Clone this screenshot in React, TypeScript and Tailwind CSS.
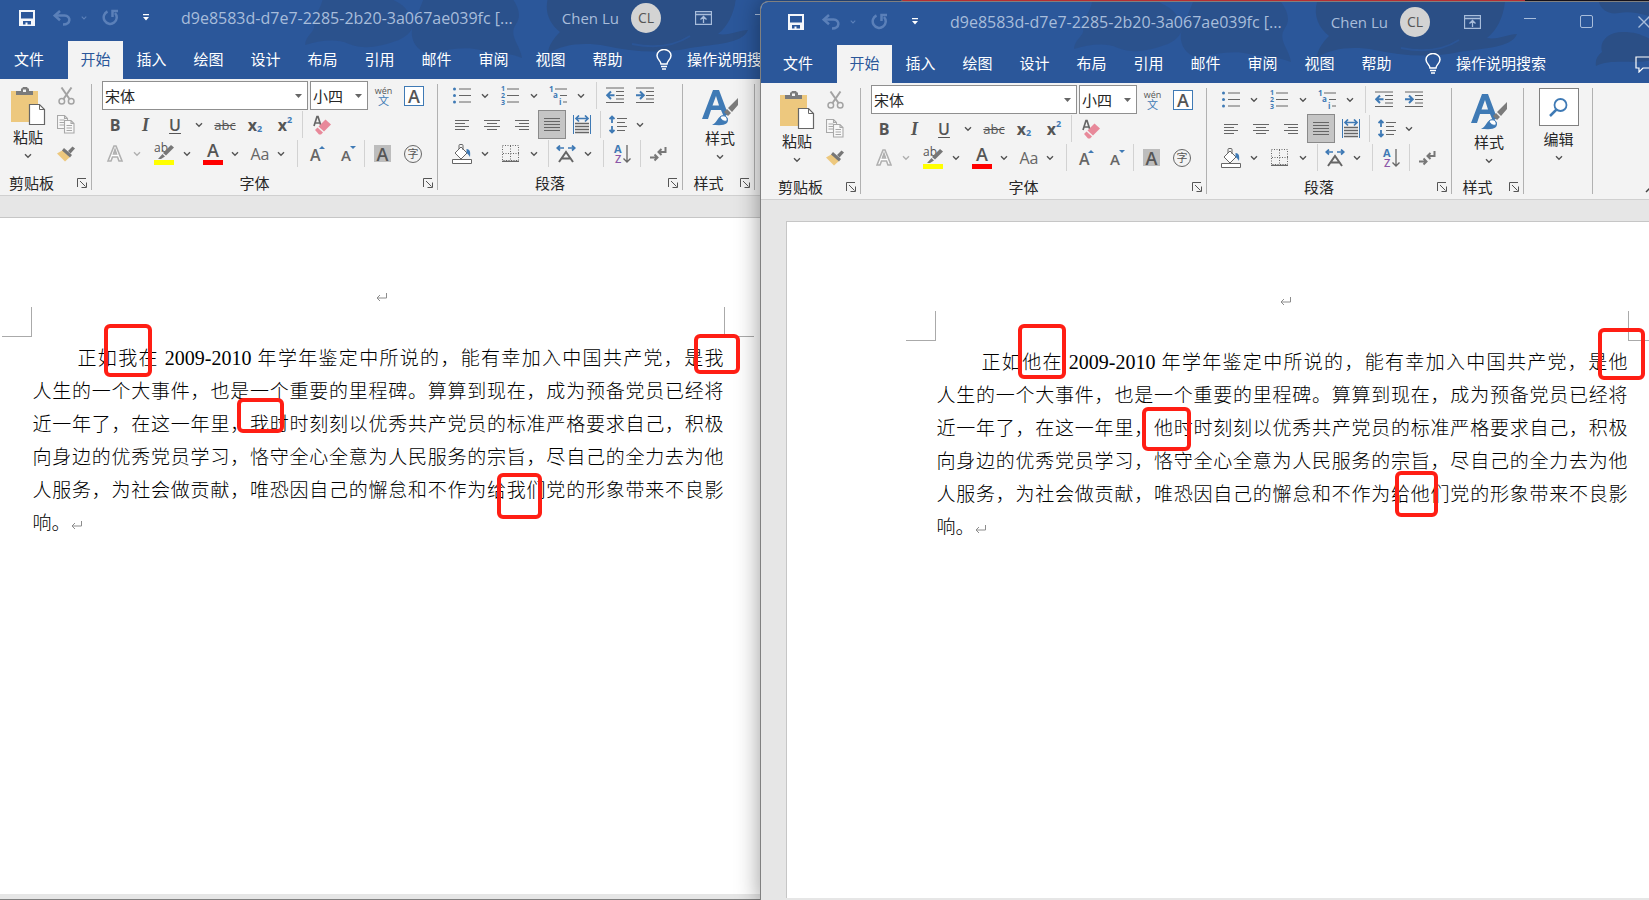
import type { ReactNode } from 'react';

const TABS = ['插入', '绘图', '设计', '布局', '引用', '邮件', '审阅', '视图', '帮助'];

const ICON = '#666666';
const BLUE = '#3f7ab5';

function Tool({ label, className, children }: { label: string; className: string; children: ReactNode }) {
  return (
    <button aria-label={label} className={`flex shrink-0 items-center justify-center ${className}`}>
      {children}
    </button>
  );
}

function Caret({ color = '#555555' }: { color?: string }) {
  return (
    <svg width="8" height="6" viewBox="0 0 8 6" fill="none" stroke={color} strokeWidth="1.4">
      <path d="M1 1.2 4 4.2 7 1.2" />
    </svg>
  );
}

function Drop({ className, color }: { className: string; color?: string }) {
  return (
    <Tool label="更多选项" className={className}>
      <Caret color={color} />
    </Tool>
  );
}

function Divider({ className = '' }: { className?: string }) {
  return <span className={`h-[27px] w-px shrink-0 self-center bg-[#d2d2d2] ${className}`} />;
}

function Launcher() {
  return (
    <button aria-label="对话框启动器" className="shrink-0">
      <svg width="10" height="10" viewBox="0 0 10 10" fill="none" stroke="#555555">
        <path d="M.5 9V.5H9" />
        <path d="M3 3 8.5 8.5M9.5 4.5v5h-5" />
      </svg>
    </button>
  );
}

function Group({ title, className, footer = true, children }: {
  title: string;
  className: string;
  footer?: boolean;
  children: ReactNode;
}) {
  return (
    <section aria-label={title} className={`relative flex shrink-0 flex-col pt-0.5 ${className}`}>
      <div className="h-[87px]">{children}</div>
      {footer && (
        <div className="flex flex-1 items-center pt-0.5 pr-[5px]">
          <span className="flex-1 pr-1.5 text-center text-[#262626]">{title}</span>
          <Launcher />
        </div>
      )}
      <span className="absolute top-[5px] right-0 bottom-[5px] w-px bg-[#b1b1b1]" />
    </section>
  );
}

function Row({ className = '', children }: { className?: string; children: ReactNode }) {
  return <div className={`flex h-[29px] items-stretch ${className}`}>{children}</div>;
}

function Picker({ label, value, className }: { label: string; value: string; className: string }) {
  return (
    <label className={`relative flex h-[29px] shrink-0 border border-[#8f8f8f] bg-white ${className}`}>
      <select aria-label={label} className="w-full appearance-none bg-transparent pl-0.5 text-[15px] leading-5 text-[#262626] outline-none">
        <option>{value}</option>
      </select>
      <svg width="7" height="4" viewBox="0 0 7 4" className="pointer-events-none absolute top-3 right-[5px]">
        <path d="M0 0h7L3.5 4z" fill={ICON} />
      </svg>
    </label>
  );
}

function Artwork() {
  return (
    <svg className="absolute inset-0 size-full" viewBox="0 0 911 81" preserveAspectRatio="none" aria-hidden="true">
      <g fill="#2b4f86">
        <path d="M331 0c-3 14-10 16-9 26 2 8-8 10-9 21 14-4 30-7 44-1 16 6 30 3 50-4 12-6 17-14 12-22C414 6 404 4 398 0z" opacity=".6" />
        <path d="M424 20c-8 14-5 30 12 36 18-4 36-8 52-4 14 3 28 2 42 8-2-14-14-22-6-34 6-8 2-18-4-26H432z" opacity=".7" />
        <path d="M556 0c-4 14 2 26 12 34-6 6-12 14-12 22 14-10 36-12 58-8 26 6 56 8 84 2 26-4 52-4 58-18-10 0-18 6-30 4 10-8 16-20 18-36z" />
        <path d="M862 30c-16 0-24 10-21 20-5 4-7 8-6 14 16-8 42-1 56-6 8-3 14-6 20-6V28c-8 6-14 12-24 8-8-4-14-6-25-6z" />
        <path d="M838 0c2 8 10 13 20 11 16-3 30 4 53 9V0z" />
      </g>
      <path d="M640 46c24 5 44 1 58-8" fill="none" stroke="#2b5596" strokeWidth="2" />
    </svg>
  );
}

function TitleBar() {
  return (
    <header className="relative flex h-[43px] items-center pb-1 pl-[19px] text-[#a8bddb]">
      <Tool label="保存" className="w-8">
        <svg width="16" height="16" viewBox="0 0 16 16" fill="#f5f7fb">
          <path fillRule="evenodd" d="M0 0h16v16H0zM2 2v6.5h12V2zM4 11v3.500h2.500V12.500h2V14.500H12V11z" />
        </svg>
      </Tool>
      <Tool label="撤消" className="w-[38px]">
        <svg width="18" height="16" viewBox="0 0 18 16" fill="none" stroke="#5b80b9" strokeWidth="2.500">
          <path d="M7 1 1.800 5.600 7 10.200" />
          <path d="M2 5.600h9.500c7 .3 6.500 9-1.500 9" />
        </svg>
      </Tool>
      <Drop className="w-[6px]" color="#5b80b9" />
      <Tool label="重复" className="w-[46px]">
        <svg width="17" height="17" viewBox="0 0 17 17" fill="none" stroke="#5b80b9" strokeWidth="2.500">
          <path d="M5.500 2.500a6.500 6.500 0 1 0 7.500 1.500" />
          <path d="M16 2h-5.500v6" />
        </svg>
      </Tool>
      <Tool label="自定义快速访问工具栏" className="w-[25px]">
        <svg width="6" height="7" viewBox="0 0 6 7" fill="#ffffff">
          <path d="M0 0h6v1.300H0zM0 3h6L3 6.500z" />
        </svg>
      </Tool>
      <h1 className="ml-[23px] w-[345px] truncate text-base leading-6">d9e8583d-d7e7-2285-2b20-3a067ae039fc [...</h1>
      <button className="mr-3.5 ml-auto flex shrink-0 items-center gap-3">
        <span className="text-[15px] leading-6">Chen Lu</span>
        <span className="flex size-[30px] items-center justify-center rounded-full bg-[#d3d3d3] text-sm text-[#555555]">CL</span>
      </button>
      <Tool label="功能区显示选项" className="w-[57px]">
        <svg width="17" height="14" viewBox="0 0 17 14" fill="none" stroke="currentColor">
          <path d="M.5.5h16v13H.5zM.5 3.500h16M8.500 12V6M5.500 8.500l3-3 3 3" strokeWidth="1.300" />
        </svg>
      </Tool>
      <Tool label="最小化" className="w-[57px]">
        <span className="mb-1.5 h-px w-3 bg-current" />
      </Tool>
      <Tool label="最大化" className="w-[57px]">
        <span className="size-[13px] rounded-xs border border-current" />
      </Tool>
      <Tool label="关闭" className="w-[57px]">
        <svg width="12" height="12" viewBox="0 0 12 12" fill="none" stroke="currentColor" strokeWidth="1.300">
          <path d="m.5.5 11 11M11.500.5l-11 11" />
        </svg>
      </Tool>
    </header>
  );
}

function TabBar() {
  return (
    <nav className="relative flex h-[38px] items-stretch text-white">
      <button className="w-[74px] shrink-0 pb-0.5">文件</button>
      <button className="ml-0.5 w-[55px] shrink-0 bg-[#f3f3f3] pb-0.5 text-[#2b579a]">开始</button>
      {TABS.map((tab) => (
        <button key={tab} className="w-[57px] shrink-0 pb-0.5">{tab}</button>
      ))}
      <button className="flex shrink-0 items-center gap-[15px] pb-0.5 pl-5">
        <svg width="16" height="21" viewBox="0 0 16 21" fill="none" stroke="#ffffff" strokeWidth="1.500">
          <path d="M5 15c0-3-4-4.500-4-8.500a7 6 0 0 1 14 0c0 4-4 5.500-4 8.500zM5 17.500h6M6 20h4" />
        </svg>
        操作说明搜索
      </button>
      <button aria-label="批注" className="mr-[17px] ml-auto">
        <svg width="20" height="17" viewBox="0 0 20 17" fill="none" stroke="#ffffff" strokeWidth="1.200">
          <path d="M1 1h18v11H8l-4 4v-4H1z" />
        </svg>
      </button>
    </nav>
  );
}

function ClipboardGroup() {
  return (
    <Group title="剪贴板" className="w-[100px]">
      <div className="flex h-full">
        <button className="ml-[15px] flex w-[42px] flex-col items-center pt-1.5 text-[#262626]">
          <svg width="36" height="38" viewBox="0 0 36 38">
            <path d="M1 4h27v31H1z" fill="#edc87e" />
            <path d="M6 8V4h5V1.500h1L13 0h4l1 1.500h1V4h4v4z" fill="#7b7b7b" />
            <path d="M13 2.500h3v2.500h-3z" fill="#f3f3f3" />
            <path d="M19.500 17.500h10l5 5V37.500h-15z" fill="#ffffff" stroke={ICON} strokeWidth="1.200" />
            <path d="M29.500 17.500v5h5" fill="none" stroke={ICON} />
          </svg>
          <span className="leading-6">粘贴</span>
          <span className="flex pt-1"><Caret /></span>
        </button>
        <div className="flex w-[34px] flex-col items-center">
          <Tool label="剪切" className="h-[29px] w-6">
            <svg width="17" height="18" viewBox="0 0 17 18" fill="none" stroke="#a3a3a3" strokeWidth="1.500">
              <path d="m3.500.5 8 11.500M13.500.5l-8 11.500" strokeWidth="2" />
              <circle cx="3.800" cy="14.200" r="2.800" />
              <circle cx="13.200" cy="14.200" r="2.800" />
            </svg>
          </Tool>
          <Tool label="复制" className="h-[29px] w-6">
            <svg width="18" height="19" viewBox="0 0 18 19" fill="#f8f8f8" stroke="#a8a8a8" strokeWidth="1.100">
              <path d="M.5.5h7l3 3v10H.5zM7.500.5v3h3" />
              <path d="M2.500 5h5M2.500 7.500h5M2.500 10h5" />
              <path d="M7.500 5.500h6.500l3 3v9.500H7.500zM14 5.500v3h3" />
              <path d="M9.500 10.500h5.500M9.500 13h5.500M9.500 15.500h5.500" />
            </svg>
          </Tool>
          <Tool label="格式刷" className="h-[29px] w-6">
            <svg width="18" height="16" viewBox="0 0 18 16">
              <path d="m6 4 7 7-5 4.500L0 7.500z" fill="#edc87e" />
              <path d="m7 2 8 7-2 2.500L5 4.500z" fill="#777777" />
              <path d="m11 5 4.500-4.500L18 2.500 13.500 7.500z" fill="#777777" />
            </svg>
          </Tool>
        </div>
      </div>
    </Group>
  );
}

function FontGroup() {
  return (
    <Group title="字体" className="w-[346px]">
      <Row className="pl-2.5">
        <Picker label="字体" value="宋体" className="mr-0.5 w-[206px]" />
        <Picker label="字号" value="小四" className="w-[58px]" />
        <Tool label="拼音指南" className="w-[31px] flex-col">
          <span className="text-[9px] leading-[9px]">wén</span>
          <span className="text-[11px] leading-[11px] text-[#3f7ab5]">文</span>
        </Tool>
        <Tool label="字符边框" className="w-[30px]">
          <span className="flex size-5 items-center justify-center border border-[#3f7ab5] bg-white text-lg leading-none font-semibold">A</span>
        </Tool>
      </Row>
      <Row className="pl-2">
        <Tool label="加粗" className="w-[30px] text-base font-bold">B</Tool>
        <Tool label="倾斜" className="w-[31px] font-['Liberation_Serif',serif] text-lg font-bold italic">I</Tool>
        <Tool label="下划线" className="w-7 text-base font-semibold underline underline-offset-2">U</Tool>
        <Drop className="w-[19px]" />
        <Tool label="删除线" className="w-[34px] text-[13px] line-through">abc</Tool>
        <Tool label="下标" className="w-[26px] text-base font-bold">
          x<span className="mt-2 text-[9px] leading-4 text-[#3f7ab5]">2</span>
        </Tool>
        <Tool label="上标" className="w-[34px] text-base font-bold">
          x<span className="mb-2.5 text-[9px] leading-4 text-[#3f7ab5]">2</span>
        </Tool>
        <Divider />
        <Tool label="清除所有格式" className="w-[38px]">
          <svg width="18" height="20" viewBox="0 0 18 20">
            <path d="M1 11 4 1.500h1L8 11M2 8h5" fill="none" stroke={ICON} strokeWidth="1.700" />
            <path d="m12.500 4.500 5.500 5-7 7-5.500-5z" fill="#e8899a" />
            <path d="m4.500 12.500 5.500 5-2 2H6L2.500 15.500v-1z" fill="#e8899a" />
          </svg>
        </Tool>
      </Row>
      <Row className="pl-2">
        <Tool label="文本效果" className="w-[30px]">
          <svg width="18" height="19" viewBox="0 0 18 19">
            <path d="M2 17 8 2h2l6 15h-3l-1.500-4h-5L5 17zM7.500 10h3L9 5.500z" fill="#ffffff" stroke="#b0b0b0" strokeWidth="1.600" />
          </svg>
        </Tool>
        <Drop className="w-[13px]" color="#b0b0b0" />
        <Tool label="文本突出显示颜色" className="ml-1 w-[34px]">
          <svg width="20" height="22" viewBox="0 0 20 22" className="overflow-visible">
            <text x="0" y="9" fontSize="12" fill="#555555">ab</text>
            <path d="m17 2 3 2.500-8 8-3-2.500zM8.500 11l2.500 2.500L7 16H4z" fill="#777777" />
            <path d="M0 17h20v5H0z" fill="#ffff00" />
          </svg>
        </Tool>
        <Drop className="w-3" />
        <Tool label="字体颜色" className="ml-1 w-8">
          <svg width="20" height="22" viewBox="0 0 20 22" className="overflow-visible">
            <text x="10" y="14" textAnchor="middle" fontSize="18" fontWeight="600" fill="#555555">A</text>
            <path d="M0 17h20v5H0z" fill="#ff0000" />
          </svg>
        </Tool>
        <Drop className="w-3" />
        <Tool label="更改大小写" className="ml-1 w-[30px] text-base text-[#666666]">Aa</Tool>
        <Drop className="w-3" />
        <Divider className="ml-2.5" />
        <Tool label="增大字号" className="w-[38px]">
          <svg width="15" height="18" viewBox="0 0 15 18" className="overflow-visible">
            <text x="0" y="16" fontSize="16" fontWeight="600" fill={ICON}>A</text>
            <path d="M9 4h6l-3-3z" fill={BLUE} />
          </svg>
        </Tool>
        <Tool label="减小字号" className="w-6">
          <svg width="15" height="18" viewBox="0 0 15 18" className="overflow-visible">
            <text x="0" y="16" fontSize="15" fontWeight="600" fill={ICON}>A</text>
            <path d="M9 1h6l-3 3z" fill={BLUE} />
          </svg>
        </Tool>
        <Divider className="ml-1" />
        <Tool label="字符底纹" className="w-[35px]">
          <span className="flex size-[17px] items-center justify-center bg-[#bdbdbd] text-lg leading-none font-semibold">A</span>
        </Tool>
        <Tool label="带圈字符" className="w-[26px]">
          <span className="flex size-[18px] items-center justify-center rounded-full border border-[#666666] text-[11px] leading-none">字</span>
        </Tool>
      </Row>
    </Group>
  );
}

function ParagraphGroup() {
  return (
    <Group title="段落" className="w-[245px]">
      <Row className="pl-2">
        <Tool label="项目符号" className="w-8">
          <svg width="18" height="17" viewBox="0 0 18 17" stroke={ICON}>
            <path d="M6 2h12M6 8.500h12M6 15h12" />
            <g fill={BLUE} stroke="none">
              <circle cx="1.500" cy="2" r="1.500" />
              <circle cx="1.500" cy="8.500" r="1.500" />
              <circle cx="1.500" cy="15" r="1.500" />
            </g>
          </svg>
        </Tool>
        <Drop className="w-3.5" />
        <Tool label="编号" className="w-9">
          <svg width="18" height="19" viewBox="0 0 18 19" className="overflow-visible">
            <path d="M6 3h12M6 9.500h12M6 16h12" stroke={ICON} />
            <g fill={BLUE} fontSize="7" fontWeight="700">
              <text x="0" y="5">1</text>
              <text x="0" y="12">2</text>
              <text x="0" y="19">3</text>
            </g>
          </svg>
        </Tool>
        <Drop className="w-3" />
        <Tool label="多级列表" className="w-9">
          <svg width="18" height="19" viewBox="0 0 18 19" className="overflow-visible">
            <path d="M6 3h12M11 9.500h7M14 16h4" stroke={ICON} />
            <g fill={BLUE} fontSize="8" fontWeight="700">
              <text x="0" y="6">1</text>
              <text x="4" y="12">a</text>
              <text x="10" y="19">i</text>
            </g>
          </svg>
        </Tool>
        <Drop className="w-2.5" />
        <Divider className="ml-2.5" />
        <Tool label="减少缩进量" className="w-9">
          <svg width="18" height="17" viewBox="0 0 18 17" fill="none">
            <path d="M0 1h18M10 4.500h8M10 8.500h8M10 12h8M0 15.500h18" stroke={ICON} />
            <path d="M8.500 8.300H2M5 4.500 1.200 8.300 5 12" stroke={BLUE} strokeWidth="2" />
          </svg>
        </Tool>
        <Tool label="增加缩进量" className="w-6">
          <svg width="18" height="17" viewBox="0 0 18 17" fill="none">
            <path d="M0 1h18M10 4.500h8M10 8.500h8M10 12h8M0 15.500h18" stroke={ICON} />
            <path d="M0 8.300h7M4 4.500l3.800 3.800L4 12" stroke={BLUE} strokeWidth="2" />
          </svg>
        </Tool>
      </Row>
      <Row className="pl-2">
        <Tool label="左对齐" className="w-8">
          <svg width="14" height="10" viewBox="0 0 14 10" stroke={ICON}><path d="M0 .5h14M0 3.500h10M0 6.500h14M0 9.500h10" /></svg>
        </Tool>
        <Tool label="居中" className="w-7">
          <svg width="16" height="10" viewBox="0 0 16 10" stroke={ICON}><path d="M0 .5h16M3 3.500h10M0 6.500h16M3 9.500h10" /></svg>
        </Tool>
        <Tool label="右对齐" className="w-8">
          <svg width="14" height="10" viewBox="0 0 14 10" stroke={ICON}><path d="M0 .5h14M4 3.500h10M0 6.500h14M4 9.500h10" /></svg>
        </Tool>
        <Tool label="两端对齐" className="w-7 border border-[#8a8a8a] bg-[#c5c5c5]">
          <svg width="16" height="13" viewBox="0 0 16 13" stroke={ICON}><path d="M0 .5h16M0 3.500h16M0 6.500h16M0 9.500h16M0 12.500h16" /></svg>
        </Tool>
        <Tool label="分散对齐" className="w-8">
          <svg width="18" height="19" viewBox="0 0 18 19" fill="none">
            <path d="M2 8.500h14M2 11.500h14M2 14.500h14M2 17.500h14" stroke={ICON} strokeWidth="1.300" />
            <path d="M.5 0v19M17.500 0v19" stroke={BLUE} />
            <path d="M3 3.500h12M6 .5l-3 3 3 3M12 .5l3 3-3 3" stroke={BLUE} strokeWidth="1.700" />
          </svg>
        </Tool>
        <Divider className="ml-0.5" />
        <Tool label="行和段落间距" className="w-[34px]">
          <svg width="18" height="19" viewBox="0 0 18 19" fill="none">
            <path d="M8 3.500h10M8 7.500h8M8 11.500h10M8 15.500h8" stroke={ICON} />
            <path d="M3 1v7M3 11v7M.5 4 3 1.500 5.500 4M.5 15 3 17.500 5.500 15" stroke={BLUE} strokeWidth="1.800" />
          </svg>
        </Tool>
        <Drop className="w-2.5" />
      </Row>
      <Row className="pl-2">
        <Tool label="底纹" className="w-8">
          <svg width="20" height="20" viewBox="0 0 20 20" fill="none" stroke={ICON}>
            <path d="m9 3 6 6-6 6-6-6z" fill="#ffffff" />
            <path d="M7 5V1.500a1 1 0 0 1 1-1h2a1 1 0 0 1 1 1V6" />
            <path d="M14.500 5c4 0 4 4 3.500 8-1-2-2-3-3.500-4z" fill={BLUE} stroke="none" />
            <path d="M.5 15.500h19v4H.5z" fill="#ffffff" />
          </svg>
        </Tool>
        <Drop className="w-3.5" />
        <Tool label="边框" className="w-9">
          <svg width="17" height="17" viewBox="0 0 17 17" fill="none" stroke={ICON}>
            <path d="M.5.5h16v15H.5zM8.500 1v15M1 8.500h16" strokeDasharray="1 1.500" />
            <path d="M0 16.500h17" strokeWidth="1.500" />
          </svg>
        </Tool>
        <Drop className="w-3" />
        <Divider className="ml-2" />
        <Tool label="中文版式" className="w-[34px]">
          <svg width="20" height="18" viewBox="0 0 20 18" fill="none">
            <path d="M3 17 10 7l7 10M5.500 13.500h9" stroke={ICON} strokeWidth="2" />
            <path d="M1 3h7M4 .5 1.200 3 4 5.500M12 3h7M16 .5 18.800 3 16 5.500" stroke={BLUE} strokeWidth="1.700" />
          </svg>
        </Tool>
        <Drop className="w-2.5" />
        <Divider className="ml-2.5" />
        <Tool label="排序" className="w-9">
          <svg width="17" height="20" viewBox="0 0 17 20" fill="none" className="overflow-visible">
            <text x="0" y="9" fontSize="11" fontWeight="700" fill={BLUE}>A</text>
            <text x="1" y="19" fontSize="11" fontWeight="600" fill="#8b57a8">Z</text>
            <path d="M13 1v17M9.500 14.500l3.500 3.500 3.500-3.500" stroke={ICON} strokeWidth="1.300" />
          </svg>
        </Tool>
        <Divider />
        <Tool label="显示编辑标记" className="w-[34px]">
          <svg width="17" height="16" viewBox="0 0 17 16" fill="none" stroke="#777777" strokeWidth="2">
            <path d="M15.500 1v5H9M11.500 3 8.500 6l3 3M0 11.500h7M4.500 8.500l3 3-3 3" />
          </svg>
        </Tool>
      </Row>
    </Group>
  );
}

function Ribbon() {
  return (
    <div className="relative flex h-[117px] border-b border-[#d0d0d0] bg-[#f3f3f3]">
      <ClipboardGroup />
      <FontGroup />
      <ParagraphGroup />
      <Group title="样式" className="w-[72px]">
        <button className="mx-auto flex flex-col items-center pt-2 pl-0.5 text-[#262626]">
          <svg width="37" height="37" viewBox="0 0 37 37">
            <path d="M0 30 11 1h6l9 24-4 3-3-7H9l-3 9zM10.500 16.500H17L14 7z" fill={BLUE} />
            <path d="M36 9v7l-6 7-4-4zM25 20l4 4-3 3-4-4z" fill="#7b7b7b" />
            <path d="M10 36c5-2 5-7 9-9 5-2 9 3 6 7-3 3-9 2-15 2z" fill={BLUE} />
            <path d="M18 28c4-3 8 0 7 4-3 1-6-1-7-4z" fill="#ffffff" stroke={BLUE} />
          </svg>
          <span className="leading-6">样式</span>
          <span className="flex pt-1"><Caret /></span>
        </button>
      </Group>
      <Group title="编辑" className="w-[69px]" footer={false}>
        <button className="mx-auto flex flex-col items-center pt-[3px] text-[#262626]">
          <span className="flex h-[38px] w-10 items-center justify-center border border-[#808080] bg-white">
            <svg width="19" height="19" viewBox="0 0 19 19" fill="none" stroke={BLUE}>
              <circle cx="11.500" cy="7" r="6" strokeWidth="1.800" />
              <path d="m7.500 11.500-6.500 6.500" strokeWidth="2.500" />
            </svg>
          </span>
          <span className="pt-px leading-6">编辑</span>
          <span className="flex pt-1"><Caret /></span>
        </button>
      </Group>
      <button aria-label="折叠功能区" className="mr-[17px] ml-auto self-end pb-1.5">
        <svg width="10" height="7" viewBox="0 0 10 7" fill="none" stroke="#444444" strokeWidth="1.500"><path d="m1 6 4-4 4 4" /></svg>
      </button>
    </div>
  );
}

function ReturnMark() {
  return (
    <svg width="11" height="9" viewBox="0 0 11 9" fill="none" stroke="#8c8c8c" className="inline-block">
      <path d="M10.500 0v5H1M4 2 1 5l3 3" />
    </svg>
  );
}

function Page({ who, className }: { who: string; className: string }) {
  const lines = [
    '人生的一个大事件，也是一个重要的里程碑。算算到现在，成为预备党员已经将',
    `近一年了，在这一年里，${who}时时刻刻以优秀共产党员的标准严格要求自己，积极`,
    '向身边的优秀党员学习，恪守全心全意为人民服务的宗旨，尽自己的全力去为他',
    `人服务，为社会做贡献，唯恐因自己的懈怠和不作为给${who}们党的形象带来不良影`,
  ];

  return (
    <article className={`flex w-[991px] shrink-0 flex-col items-center border-t border-l border-[#c6c6c6] bg-white pt-[69px] ${className}`}>
      <div className="flex h-5 items-center pl-1.5"><ReturnMark /></div>
      <div className="flex h-[30px] w-[752px] justify-between">
        <span className="w-[30px] border-r border-b border-[#aaaaaa]" />
        <span className="w-[30px] border-b border-l border-[#aaaaaa]" />
      </div>
      <div className="mt-[5px] w-[691px] font-['Liberation_Serif','Noto_Sans_CJK_SC',serif] text-[19px] leading-[33px] font-light text-black">
        <p className="pl-[45px] text-justify whitespace-nowrap [text-align-last:justify]">
          正如{who}在 <span className="text-xl leading-none">2009-2010</span> 年学年鉴定中所说的，能有幸加入中国共产党，是{who}
        </p>
        {lines.map((line) => (
          <p key={line} className="text-justify whitespace-nowrap [text-align-last:justify]">{line}</p>
        ))}
        <p>响。<ReturnMark /></p>
      </div>
    </article>
  );
}

function WordWindow({ who, className, pageClassName }: { who: string; className: string; pageClassName: string }) {
  return (
    <main className={`absolute flex w-[913px] flex-col overflow-hidden rounded-t-lg border border-[#808080] bg-[#e6e6e6] ${className}`}>
      <div className="relative bg-[#2b579a]">
        <Artwork />
        <TitleBar />
        <TabBar />
      </div>
      <Ribbon />
      <div className="flex flex-1 items-stretch overflow-hidden pt-[21px] pb-[5px]">
        <Page who={who} className={pageClassName} />
      </div>
    </main>
  );
}

const MARKS = [
  'left-[104px] top-[324px] w-12 h-[53px]',
  'left-[694px] top-[334px] w-[46px] h-10',
  'left-[237px] top-[398px] w-[47px] h-[35px]',
  'left-[497px] top-[473px] w-[45px] h-[46px]',
  'left-[1018px] top-[324px] w-12 h-[55px]',
  'left-[1598px] top-[328px] w-[47px] h-[52px]',
  'left-[1142px] top-[407px] w-[49px] h-11',
  'left-[1395px] top-[471px] w-[43px] h-[46px]',
];

export default function App() {
  return (
    <div className="relative h-screen overflow-hidden bg-[#e23b3e] font-['Open_Sans','Noto_Sans_CJK_SC',sans-serif] text-[15px] leading-6 text-[#555555]">
      <span className="absolute top-0 right-0 h-2 w-[124px] bg-[#1b1620]" />
      <WordWindow who="我" className="-top-[3px] bottom-0 -left-[9px]" pageClassName="-ml-[110px]" />
      <WordWindow
        who="他"
        className="top-px -bottom-1 left-[760px] shadow-[0_0_24px_rgba(0,0,0,0.4)]"
        pageClassName="ml-[25px]"
      />
      {MARKS.map((mark) => (
        <span key={mark} className={`absolute rounded-md border-4 border-[#ff1e14] ${mark}`} />
      ))}
    </div>
  );
}
